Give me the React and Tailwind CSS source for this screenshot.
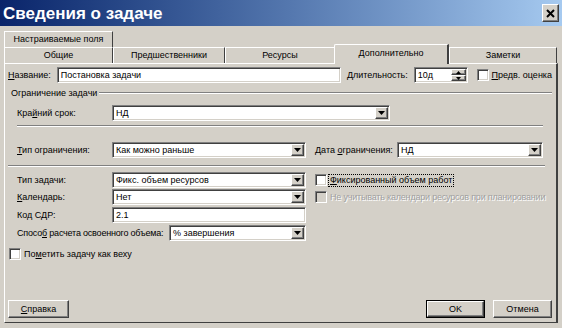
import React from 'react';

const sunken =
  'border border-t-[#808080] border-l-[#808080] border-b-white border-r-white shadow-[inset_1px_1px_0_#404040,inset_-1px_-1px_0_#d4d0c8]';
const raised =
  'border border-t-white border-l-white border-b-[#404040] border-r-[#404040] shadow-[inset_-1px_-1px_0_#808080,inset_1px_1px_0_#d4d0c8]';

function U({ children }) {
  return <span className="underline underline-offset-[1px]">{children}</span>;
}

function Arrow() {
  return (
    <div className={`${raised} w-[13px] h-full bg-[#d4d0c8] flex items-center justify-center shrink-0`}>
      <svg width="7" height="4" viewBox="0 0 7 4">
        <path d="M0 0h7L3.5 4z" fill="#000" />
      </svg>
    </div>
  );
}

function Select({ value, className = '' }) {
  return (
    <div className={`${sunken} bg-white h-[16px] flex items-stretch p-[1px] ${className}`}>
      <div className="flex-1 pl-[2px] flex items-center truncate">{value}</div>
      <Arrow />
    </div>
  );
}

function Input({ value, className = '' }) {
  return (
    <div className={`${sunken} bg-white h-[16px] flex items-center pl-[3px] ${className}`}>{value}</div>
  );
}

function Check({ disabled, className = '' }) {
  return (
    <div className={`${sunken} w-[12px] h-[12px] shrink-0 ${disabled ? 'bg-[#d4d0c8]' : 'bg-white'} ${className}`} />
  );
}

function Button({ children, def, className = '' }) {
  return (
    <div className={`h-[18px] ${def ? 'border border-black' : ''} ${className}`}>
      <div className={`${raised} h-full bg-[#d4d0c8] flex items-center justify-center`}>{children}</div>
    </div>
  );
}

function Tab({ label, width, selected }) {
  if (selected) {
    return (
      <div
        className={`relative z-10 h-[20px] -mb-[1px] -ml-[1px] ${width} bg-[#d4d0c8] border-l border-t border-white border-r-2 border-r-[#404040] rounded-tl-[2px] flex items-center justify-center pb-[2px]`}
      >
        {label}
      </div>
    );
  }
  return (
    <div className={`h-[16px] ${width} border-t border-l border-white border-r border-r-[#404040] flex items-center justify-center`}>
      {label}
    </div>
  );
}

export default function App() {
  return (
    <div className="w-[562px] h-[328px] bg-[#d4d0c8] overflow-hidden font-['Liberation_Sans',Arial,sans-serif] text-[9px] text-black leading-none whitespace-nowrap">
      {/* Title bar */}
      <div className="h-[26px] bg-gradient-to-r from-[#0a246a] to-[#a6caf0] flex items-center pl-[3px] pr-[3px]">
        <div className="flex-1 text-white font-bold text-[17px]">Сведения о задаче</div>
        <div className={`${raised} w-[17px] h-[18px] bg-[#d4d0c8] flex items-center justify-center`}>
          <svg width="9" height="9" viewBox="0 0 9 9">
            <path d="M1 1L8 8M8 1L1 8" stroke="#000" strokeWidth="2" />
          </svg>
        </div>
      </div>

      <div className="px-[4px] pt-[5px]">
        {/* Tabs */}
        <div className="flex h-[16px]">
          <Tab label="Настраиваемые поля" width="w-[109px]" />
        </div>
        <div className="flex items-end h-[16px]">
          <Tab label="Общие" width="w-[109px]" />
          <Tab label="Предшественники" width="w-[112px]" />
          <Tab label="Ресурсы" width="w-[110px]" />
          <Tab label="Дополнительно" width="w-[115px]" selected />
          <Tab label="Заметки" width="w-[108px]" />
        </div>

        {/* Panel */}
        <div className="h-[260px] border-l border-t border-white border-r-2 border-r-[#404040] border-b border-b-[#404040] flex flex-col pt-[3px] pl-[3px] pr-[4px] pb-[4px]">
          <div className="flex items-center h-[16px]">
            <div className="w-[49px]">
              <U>Н</U>азвание:
            </div>
            <Input value="Постановка задачи" className="w-[285px]" />
            <div className="ml-[6px] w-[67px]">Длительность:</div>
            <div className={`${sunken} bg-white h-[16px] w-[54px] flex items-stretch p-[1px]`}>
              <div className="flex-1 pl-[2px] flex items-center">10д</div>
              <div className="w-[15px] flex flex-col">
                <div className={`${raised} flex-1 bg-[#d4d0c8] flex items-center justify-center`}>
                  <svg width="5" height="3" viewBox="0 0 5 3">
                    <path d="M0 3h5L2.5 0z" fill="#000" />
                  </svg>
                </div>
                <div className={`${raised} flex-1 bg-[#d4d0c8] flex items-center justify-center`}>
                  <svg width="5" height="3" viewBox="0 0 5 3">
                    <path d="M0 0h5L2.5 3z" fill="#000" />
                  </svg>
                </div>
              </div>
            </div>
            <Check className="ml-[9px]" />
            <div className="ml-[3px]">
              <U>П</U>редв. оценка
            </div>
          </div>

          {/* Group header */}
          <div className="mt-[4px] h-[12px] flex items-center">
            <div className="ml-[3px] pr-[2px]">Ограничение задачи</div>
            <div className="flex-1 h-[2px] border-t border-t-[#808080] border-b border-b-white" />
          </div>

          <div className="mt-[6px] h-[16px] flex items-center ml-[9px]">
            <div className="w-[95px]">
              Кра<U>й</U>ний срок:
            </div>
            <Select value="НД" className="w-[278px]" />
          </div>

          <div className="mt-[4px] mx-[9px] h-[2px] border-t border-t-[#808080] border-b border-b-white" />

          <div className="mt-[15px] h-[16px] flex items-center ml-[9px] mr-[9px]">
            <div className="w-[95px]">
              <U>Т</U>ип ограничения:
            </div>
            <Select value="Как можно раньше" className="w-[194px]" />
            <div className="ml-[9px] w-[82px]">
              Дата <U>о</U>граничения:
            </div>
            <Select value="НД" className="flex-1" />
          </div>

          <div className="mt-[7px] mr-[7px] h-[2px] border-t border-t-[#808080] border-b border-b-white" />

          {/* Lower block */}
          <div className="mt-[5px] flex ml-[9px]">
            <div className="flex flex-col w-[289px] shrink-0">
              <div className="h-[16px] flex items-center">
                <div className="w-[95px]">Тип задачи:</div>
                <Select value="Фикс. объем ресурсов" className="flex-1" />
              </div>
              <div className="mt-[1px] h-[16px] flex items-center">
                <div className="w-[95px]">
                  <U>К</U>алендарь:
                </div>
                <Select value="Нет" className="flex-1" />
              </div>
              <div className="mt-[2px] h-[16px] flex items-center">
                <div className="w-[95px]">
                  Код С<U>Д</U>Р:
                </div>
                <Input value="2.1" className="flex-1" />
              </div>
              <div className="mt-[2px] h-[16px] flex items-center">
                <div className="w-[152px] tracking-[-0.2px]">
                  Спосо<U>б</U> расчета освоенного объема:
                </div>
                <Select value="% завершения" className="flex-1" />
              </div>
            </div>
            <div className="flex flex-col ml-[9px]">
              <div className="h-[16px] flex items-center">
                <Check />
                <div className="ml-[2px] px-[1px] py-[1px] outline outline-1 outline-dotted outline-black">
                  <U>Ф</U>иксированный объем работ
                </div>
              </div>
              <div className="mt-[1px] h-[16px] flex items-center">
                <Check disabled />
                <div className="ml-[3px] text-[#a0a0a0] tracking-[-0.2px] [text-shadow:1px_1px_0_#fff]">
                  Не учитывать календари ресурсов при планировании
                </div>
              </div>
            </div>
          </div>

          <div className="mt-[7px] h-[12px] flex items-center ml-[1px]">
            <Check />
            <div className="ml-[3px]">
              По<U>м</U>етить задачу как веху
            </div>
          </div>

          <div className="flex-1" />

          <div className="flex items-center">
            <Button className="w-[61px]">
              <span>
                <U>С</U>правка
              </span>
            </Button>
            <div className="flex-1" />
            <Button def className="w-[59px]">
              OK
            </Button>
            <Button className="w-[59px] ml-[8px]">Отмена</Button>
          </div>
        </div>
      </div>
    </div>
  );
}
